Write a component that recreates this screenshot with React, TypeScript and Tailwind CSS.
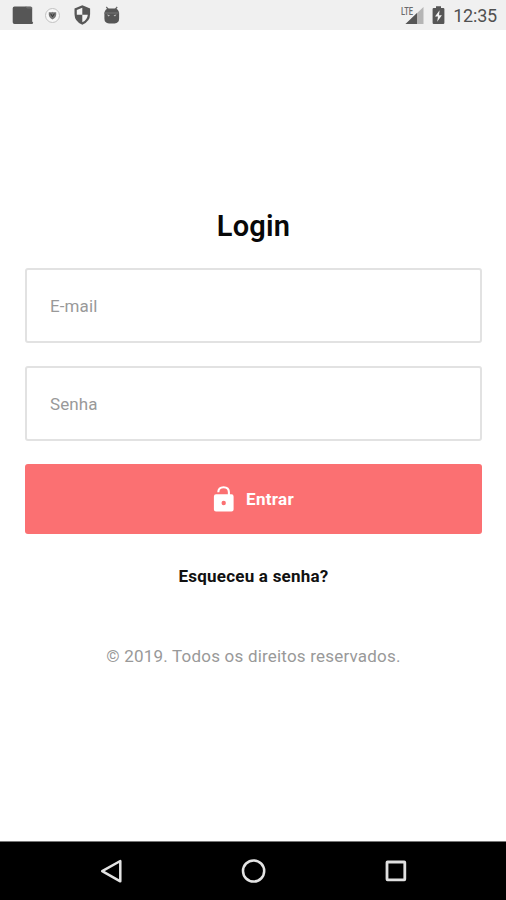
import React from "react";

function StatusBar() {
  return (
    <header className="flex h-[30px] shrink-0 items-center justify-between bg-[#f0f0f0] pr-[9px] pl-3">
      <div className="flex h-full items-center">
        <svg width="22" height="30" viewBox="0 0 22 30">
          <path d="M2.500 6.500h16q1.700 0 1.700 1.600v13.500l1 1.200-.8 1.200H2.500q-1.800 0-1.800-1.700V8.200q0-1.700 1.800-1.700Z" fill="#565656" />
          <path d="M14 6.500l1.200 1.400h5" stroke="#777" fill="none" />
        </svg>
        <svg className="ml-[10px]" width="18" height="30" viewBox="0 0 18 30">
          <circle cx="8.500" cy="15.500" r="7" fill="#f7f7f7" stroke="#c2c2c2" />
          <path d="M4.800 12.200q3.700.4 3.700-.5q0 .9 3.700.5q.7 5.300-3.700 7.300q-4.400-2-3.700-7.300Z" fill="#757575" />
          <path d="M6.700 13.700l1.800 3 1.800-3" stroke="#333" fill="none" />
        </svg>
        <svg className="ml-3" width="18" height="30" viewBox="0 0 18 30">
          <path d="M8.300 5.300l7.800 3.100v5.600q0 7.600-7.800 10.700Q.5 21.600.5 14V8.400Z" fill="#575757" />
          <path d="M8.300 7.700v7.100H2.800V9.900ZM8.300 14.800h5.500q-.5 5.200-5.500 7.500Z" fill="#f4f4f4" />
        </svg>
        <svg className="ml-3" width="17" height="30" viewBox="0 0 17 30">
          <path d="M2.300 7l2.500 3M13.200 7l-2.500 3" stroke="#666" strokeWidth="1.200" />
          <path d="M.4 13.600Q.8 8.500 5 8.500h5.500q4.200 0 4.600 5.100Z" fill="#565656" />
          <path d="M.4 12.600h14.700v5.800q0 4.600-4.500 5H5q-4.600-.4-4.600-5Z" fill="#565656" />
          <path d="M1 13h13.500" stroke="#858585" strokeWidth=".7" />
          <path d="M3 14.600l3 .6-1.500 1.300ZM12.500 14.600l-3 .6 1.500 1.300Z" fill="#bbb" />
        </svg>
      </div>
      <div className="flex h-full items-center">
        <svg width="24" height="30" viewBox="0 0 24 30">
          <path d="M22.500 7v17h-18Z" fill="#b5b5b5" />
          <path d="M16 13.100V24H4.500Z" fill="#565656" />
          <text x="0" y="14.500" textLength="12" lengthAdjust="spacingAndGlyphs" fontSize="10" fontWeight="500" fill="#6a6a6a" stroke="#f0f0f0" strokeWidth="1.500" paintOrder="stroke">LTE</text>
        </svg>
        <svg className="ml-[7px]" width="13" height="30" viewBox="0 0 13 30">
          <path d="M4 6.300h5v1.600h2.200q1.200 0 1.200 1.200v13.600q0 1.300-1.200 1.300H1.800Q.6 24 .6 22.700V9.100q0-1.200 1.200-1.200H4Z" fill="#565656" />
          <path d="M7.600 10.200L3 16.500h3l-.8 5.200 4.700-6.400H7Z" fill="#f3f3f3" />
        </svg>
        <span className="ml-[8px] pt-[2px] text-[18px] leading-none tracking-[-0.2px] text-[#505050]">12:35</span>
      </div>
    </header>
  );
}

function Field({ label, type }: { label: string; type: string }) {
  return (
    <input
      type={type}
      placeholder={label}
      aria-label={label}
      className="block h-[75px] w-full rounded-[3px] border-2 border-[#e2e2e2] bg-white px-[23px] pt-px text-[17px] tracking-[0.1px] outline-none placeholder:text-[#999]"
    />
  );
}

function NavigationBar() {
  return (
    <nav className="flex h-[59px] shrink-0 items-center justify-between border-t border-[#777] bg-black px-[99px]">
      <button aria-label="Voltar">
        <svg width="24" height="26" viewBox="0 0 24 26" fill="none" stroke="#e4e4e4" strokeWidth="2.500">
          <path d="M21.300 3v20.300L3.200 13.200Z" strokeLinejoin="round" />
        </svg>
      </button>
      <button aria-label="Início">
        <svg width="26" height="26" viewBox="0 0 26 26" fill="none" stroke="#e4e4e4" strokeWidth="2.500">
          <circle cx="13.600" cy="13" r="10.600" />
        </svg>
      </button>
      <button aria-label="Recentes">
        <svg width="24" height="26" viewBox="0 0 24 26" fill="none" stroke="#e0e0e0" strokeWidth="2.800">
          <rect x="4" y="4" width="17.800" height="17.800" rx=".5" />
        </svg>
      </button>
    </nav>
  );
}

export default function App() {
  return (
    <div className="flex h-[900px] w-[506px] flex-col overflow-hidden bg-white font-[Roboto,sans-serif]">
      <StatusBar />
      <main className="flex flex-1 flex-col items-center pr-6 pl-[25px] pt-[178px]">
        <h1 className="text-[29px] leading-[36px] font-semibold tracking-[0.25px] text-[#080808]">Login</h1>
        <form className="mt-6 flex w-full flex-col gap-[23px]" onSubmit={(event) => event.preventDefault()}>
          <Field label="E-mail" type="email" />
          <Field label="Senha" type="password" />
          <button className="flex h-[70px] w-full items-center justify-center rounded-[3px] bg-[#fb7072] text-[17px] font-bold text-white">
            <svg width="22" height="28" viewBox="0 0 22 28">
              <path d="M5.300 7.300Q5.300 2.300 10.600 2.300Q15.900 2.300 15.900 7.300V10" fill="none" stroke="white" strokeWidth="2.100" />
              <path fillRule="evenodd" d="M3 9.300h15.500q2.100 0 2.100 2.100v13.100q0 2.100-2.100 2.100H3q-2.100 0-2.100-2.100V11.400Q.9 9.300 3 9.300Zm7.700 6.500a2.200 2.200 0 1 0 0 4.400 2.200 2.200 0 0 0 0-4.400Z" fill="white" />
            </svg>
            <span className="ml-[11px] pt-[2px] tracking-[0.3px]">Entrar</span>
          </button>
        </form>
        <a href="#" className="mt-[30px] text-[17px] leading-6 font-bold tracking-[0.22px] text-[#111]">Esqueceu a senha?</a>
        <p className="mt-14 text-[17px] leading-6 tracking-[0.2px] text-[#999]">© 2019. Todos os direitos reservados.</p>
      </main>
      <NavigationBar />
    </div>
  );
}
